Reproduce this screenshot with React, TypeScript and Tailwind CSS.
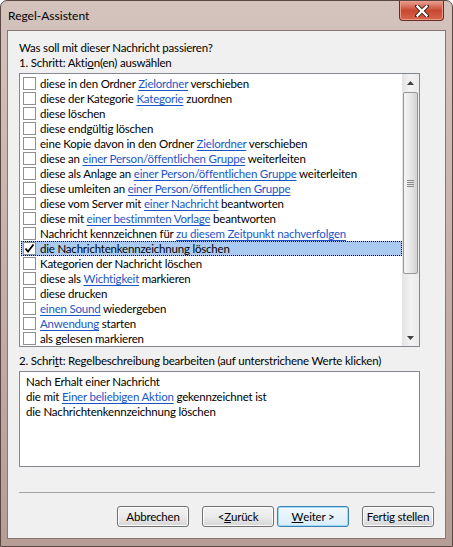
import React from "react";

type Part = string | { link: string };

const rows: Part[][] = [
  ["diese in den Ordner ", { link: "Zielordner" }, " verschieben"],
  ["diese der Kategorie ", { link: "Kategorie" }, " zuordnen"],
  ["diese löschen"],
  ["diese endgültig löschen"],
  ["eine Kopie davon in den Ordner ", { link: "Zielordner" }, " verschieben"],
  ["diese an ", { link: "einer Person/öffentlichen Gruppe" }, " weiterleiten"],
  ["diese als Anlage an ", { link: "einer Person/öffentlichen Gruppe" }, " weiterleiten"],
  ["diese umleiten an ", { link: "einer Person/öffentlichen Gruppe" }],
  ["diese vom Server mit ", { link: "einer Nachricht" }, " beantworten"],
  ["diese mit ", { link: "einer bestimmten Vorlage" }, " beantworten"],
  ["Nachricht kennzeichnen für ", { link: "zu diesem Zeitpunkt nachverfolgen" }],
  ["die Nachrichtenkennzeichnung löschen"],
  ["Kategorien der Nachricht löschen"],
  ["diese als ", { link: "Wichtigkeit" }, " markieren"],
  ["diese drucken"],
  [{ link: "einen Sound" }, " wiedergeben"],
  [{ link: "Anwendung" }, " starten"],
  ["als gelesen markieren"],
];

const SELECTED = 11;

function Text({ parts }: { parts: Part[] }) {
  return (
    <span className="whitespace-pre">
      {parts.map((p, i) =>
        typeof p === "string" ? (
          <span key={i}>{p}</span>
        ) : (
          <span key={i} className="text-[#1a55c8] underline underline-offset-[2px]">
            {p.link}
          </span>
        )
      )}
    </span>
  );
}

function Button({ children, focused }: { children: React.ReactNode; focused?: boolean }) {
  return (
    <button
      className={`flex h-[21px] w-[72px] items-center justify-center whitespace-nowrap rounded-[3px] border text-black ${
        focused
          ? "border-[#3c7fb1] bg-gradient-to-b from-[#f2f9fd] to-[#d9ecf8] shadow-[inset_0_0_0_1px_#9fdaf6]"
          : "border-[#707070] bg-gradient-to-b from-[#f2f2f2] via-[#ebebeb] to-[#d6d6d6] shadow-[inset_0_0_0_1px_#fcfcfc]"
      }`}
    >
      {children}
    </button>
  );
}

export default function App() {
  return (
    <div className="h-[547px] w-[453px] overflow-hidden bg-white">
      <div
        className="relative flex h-[547px] w-[453px] flex-col rounded-t-[7px] border border-[#5b4843] bg-gradient-to-b from-[#d4c3bd] via-[#c5b0a9] to-[#b69d96] text-[11.5px] leading-[15px] tracking-[-0.2px] text-black"
        style={{ fontFamily: 'Lato, "Liberation Sans", sans-serif' }}
      >
        <div className="flex h-[29px] items-center pl-[7px] text-[12px] tracking-normal">Regel-Assistent</div>
        <div className="absolute right-[8px] top-0 flex h-[20px] w-[45px] items-center justify-center rounded-b-[4px] border border-t-0 border-[#6b2c20] bg-gradient-to-b from-[#e7a093] via-[#c8472f] to-[#d8654e] shadow-[inset_0_0_0_1px_#eb9a8a]">
          <svg width="14" height="12" viewBox="0 0 14 12">
            <path d="M2 1 L12 11 M12 1 L2 11" stroke="#4a1f18" strokeWidth="4.2" strokeLinecap="square" />
            <path d="M2.5 1.5 L11.5 10.5 M11.5 1.5 L2.5 10.5" stroke="#ffffff" strokeWidth="2.4" strokeLinecap="square" />
          </svg>
        </div>

        <div className="mx-[6px] flex h-[509px] flex-col border border-[#8a7570] bg-[#f0f0f0] pl-[11px] pt-[9px]">
          <div>Was soll mit dieser Nachricht passieren?</div>
          <div>
            1. Schritt: Akti<span className="underline">o</span>n(en) auswählen
          </div>

          <div className="mt-[3px] flex h-[274px] w-[401px] border border-[#828790] bg-white">
            <div className="flex flex-1 flex-col pl-[1px] pt-[2px]">
              {rows.map((r, i) => (
                <div
                  key={i}
                  className={`flex h-[15px] items-center gap-[4px] pl-[1px] ${
                    i === SELECTED ? "border border-dotted border-black bg-[#aacbef]" : "border border-transparent"
                  }`}
                >
                  <div className="relative h-[13px] w-[13px] shrink-0 border border-[#8e8f8f] bg-white">
                    {i === SELECTED && (
                      <svg className="absolute left-0 top-0" width="11" height="11" viewBox="0 0 11 11">
                        <path d="M1.5 5.5 L4 8.5 L9.5 1.5" stroke="#000" strokeWidth="1.8" fill="none" />
                      </svg>
                    )}
                  </div>
                  <Text parts={r} />
                </div>
              ))}
            </div>
            <div className="flex w-[17px] flex-col bg-gradient-to-r from-[#e3e3e3] via-[#f2f2f2] to-[#ececec]">
              <div className="flex h-[17px] items-center justify-center">
                <svg width="7" height="4" viewBox="0 0 7 4">
                  <path d="M0 4 L3.5 0 L7 4 Z" fill="#404040" />
                </svg>
              </div>
              <div className="mx-[1px] mt-[1px] flex h-[182px] items-center justify-center rounded-[2px] border border-[#979797] bg-gradient-to-r from-[#f4f4f4] via-[#e8e8e8] to-[#d2d2d2]">
                <div className="flex flex-col gap-[1px]">
                  <div className="h-[1px] w-[7px] bg-[#8a8a8a]" />
                  <div className="h-[1px] w-[7px] bg-[#8a8a8a]" />
                  <div className="h-[1px] w-[7px] bg-[#8a8a8a]" />
                  <div className="h-[1px] w-[7px] bg-[#8a8a8a]" />
                </div>
              </div>
              <div className="flex-1" />
              <div className="flex h-[17px] items-center justify-center">
                <svg width="7" height="4" viewBox="0 0 7 4">
                  <path d="M0 0 L7 0 L3.5 4 Z" fill="#404040" />
                </svg>
              </div>
            </div>
          </div>

          <div className="mt-[6px]">
            2. Schri<span className="underline">t</span>t: Regelbeschreibung bearbeiten (auf unterstrichene Werte klicken)
          </div>
          <div className="mt-[3px] h-[96px] w-[401px] border border-[#828790] bg-white pl-[6px] pt-[2px]">
            <div>Nach Erhalt einer Nachricht</div>
            <div>
              die mit{" "}
              <span className="text-[#1a55c8] underline underline-offset-[2px]">Einer beliebigen Aktion</span>{" "}
              gekennzeichnet ist
            </div>
            <div>die Nachrichtenkennzeichnung löschen</div>
          </div>

          <div className="mr-[10px] mt-[25px] h-[2px] border-t border-[#a0a0a0] border-b-white" />

          <div className="mr-[11px] mt-[12px] flex justify-end">
            <Button>Abbrechen</Button>
            <div className="ml-[13px] flex gap-[3px]">
              <Button>
                &lt; <span className="underline">Z</span>urück
              </Button>
              <Button focused>
                <span className="underline">W</span>eiter &gt;
              </Button>
            </div>
            <div className="ml-[13px]">
              <Button>Fertig stellen</Button>
            </div>
          </div>
        </div>
      </div>
    </div>
  );
}
